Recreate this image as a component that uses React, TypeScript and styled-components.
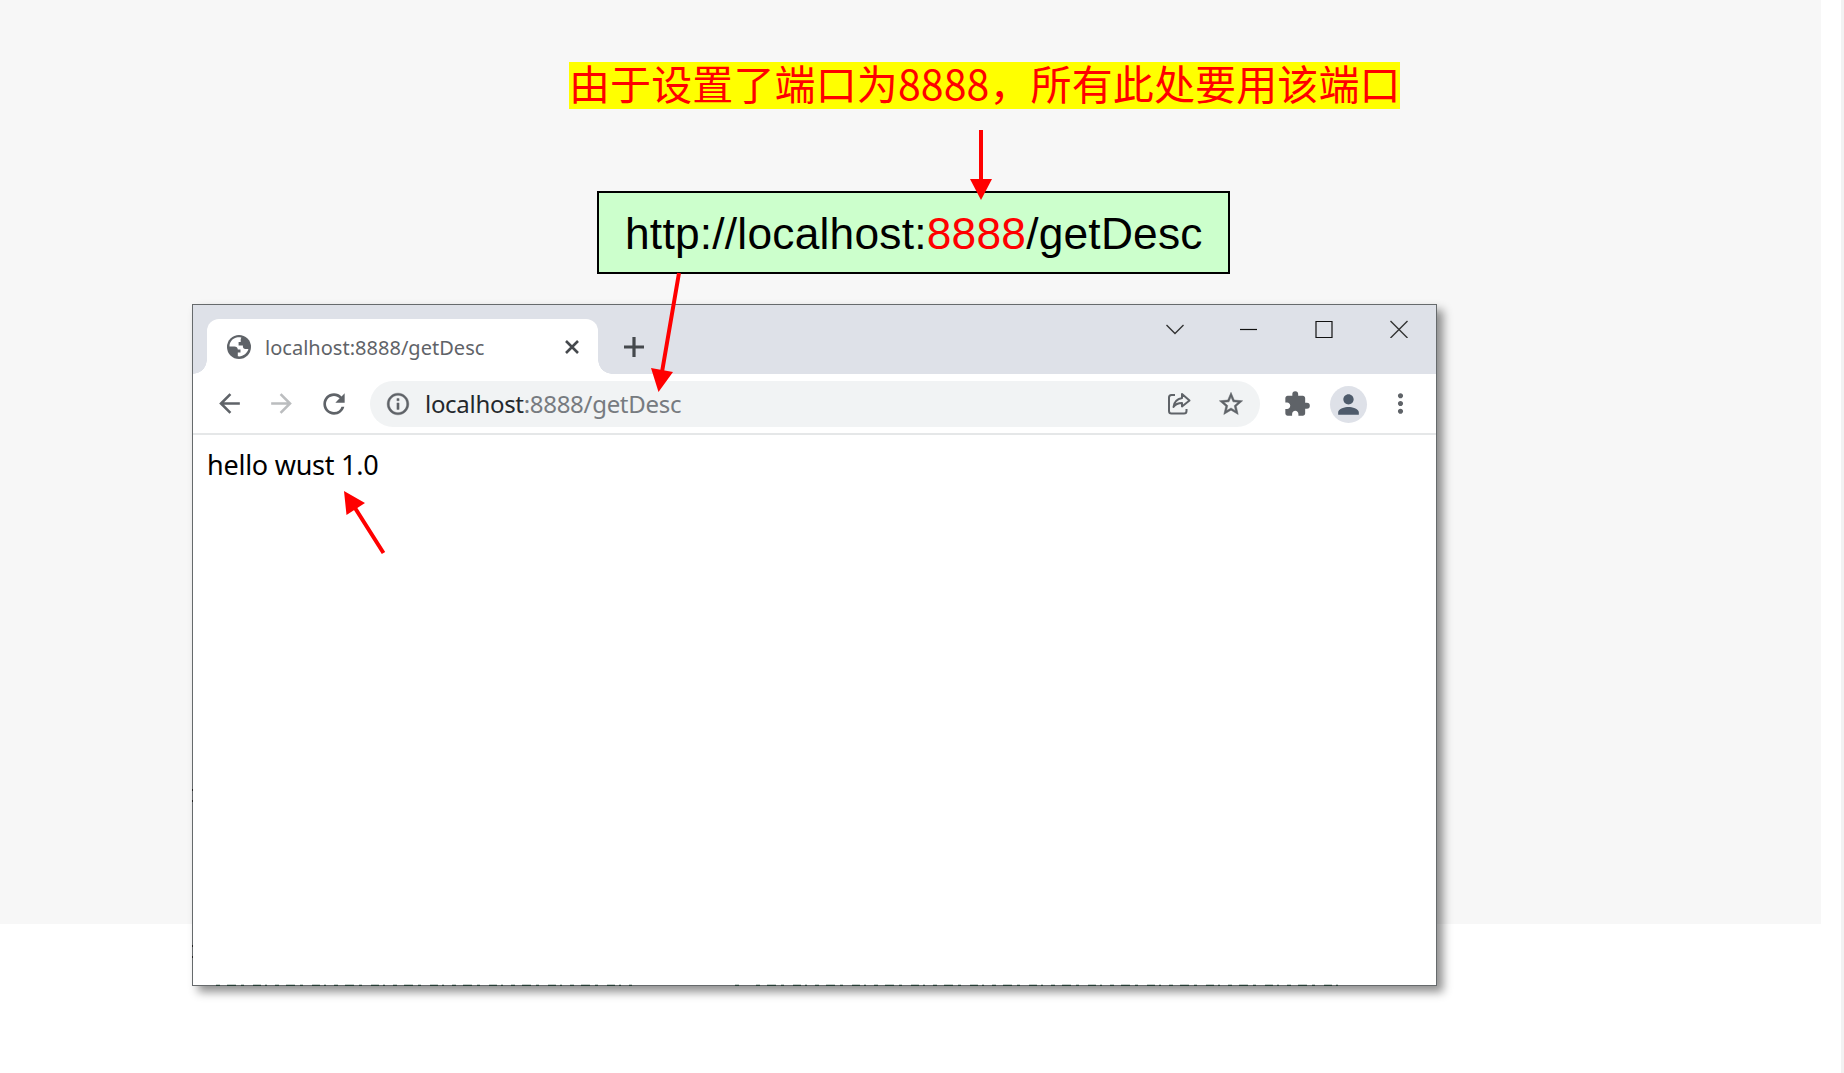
import React from 'react';
import styled, { createGlobalStyle } from 'styled-components';
import { MdArrowBack, MdArrowForward, MdRefresh, MdInfoOutline, MdStarBorder, MdExtension, MdPerson, MdMoreVert } from 'react-icons/md';

const GlobalStyle = createGlobalStyle`
  * { box-sizing: border-box; }
  body { margin: 0; background: #fff; overflow: hidden; }
`;

const Page = styled.main`
  position: relative;
  width: 1844px;
  height: 1073px;
  border-right: 3px solid #f2f2f2;
  background: linear-gradient(#f7f7f7, #f7f7f7) 0 0 / 1821px 924px no-repeat #fff;
  overflow: hidden;
  font-family: "Noto Sans", "Noto Sans CJK SC", sans-serif;
`;

const Heading = styled.h1`
  width: 831px;
  height: 47px;
  margin: 62px 0 0 569px;
  background: #ff0;
  color: #f00;
  font: 400 41px/41px "Noto Sans CJK SC", sans-serif;
  letter-spacing: 0.12px;
  white-space: nowrap;
`;

const UrlCard = styled.div`
  display: flex;
  align-items: center;
  width: 633px;
  height: 83px;
  margin: 82px 0 0 597px;
  padding: 3px 0 0 26px;
  border: 2px solid #000;
  background: #cfc;
  font: 44.3px/1 "Liberation Sans", Arial, sans-serif;
  letter-spacing: 0.22px;
  white-space: nowrap;
`;

const Port = styled.span`
  color: #f00;
`;

const Window = styled.section`
  display: flex;
  flex-direction: column;
  width: 1245px;
  height: 682px;
  margin: 30px 0 0 192px;
  border: 1px solid #666a6c;
  background: #fff;
  box-shadow: 6px 6px 9px rgba(0, 0, 0, 0.44);
`;

const TabStrip = styled.header`
  display: flex;
  align-items: flex-end;
  height: 69px;
  background: #dee1e8;
`;

const Tab = styled.div`
  position: relative;
  display: flex;
  align-items: center;
  width: 391px;
  height: 55px;
  margin-left: 14px;
  padding: 0 19px 0 17px;
  border-radius: 12px 12px 0 0;
  background: #fff;
  &::before, &::after {
    content: "";
    position: absolute;
    bottom: 0;
    width: 14px;
    height: 14px;
  }
  &::before { left: -14px; background: radial-gradient(circle at 0 0, transparent 13.5px, #fff 14px); }
  &::after { right: -14px; background: radial-gradient(circle at 100% 0, transparent 13.5px, #fff 14px); }
`;

const Text = styled.span<{ $size: number; $spacing: number; $color: string }>`
  font-size: ${p => p.$size}px;
  line-height: 1;
  letter-spacing: ${p => p.$spacing}px;
  color: ${p => p.$color};
  white-space: nowrap;
`;

const TabTitle = styled.div`
  display: flex;
  flex: 1;
  margin-left: 11px;
  padding-top: 2px;
`;

const NewTab = styled.div`
  display: flex;
  align-items: center;
  height: 55px;
  margin-left: 26px;
`;

const Controls = styled.div`
  display: flex;
  align-self: flex-start;
  gap: 57px;
  margin: 15px 28px 0 auto;
`;

const Toolbar = styled.nav`
  display: flex;
  align-items: center;
  height: 61px;
  padding-left: 20px;
  border-bottom: 2px solid #e5e7e8;
`;

const Slot = styled.span<{ $w: number; $color?: string; $bold?: boolean }>`
  display: flex;
  flex: none;
  justify-content: center;
  width: ${p => p.$w}px;
  color: ${p => p.$color ?? '#5f6368'};
  ${p => p.$bold && 'path:not([fill="none"]) { stroke: currentColor; stroke-width: 0.4px; }'}
`;

const Omnibox = styled.div`
  display: flex;
  flex: none;
  align-items: center;
  width: 890px;
  height: 46px;
  margin: 0 12px 0 20px;
  padding: 0 3px;
  border-radius: 23px;
  background: #f1f3f4;
`;

const Address = styled.div`
  display: flex;
  flex: 1;
  margin-left: 2px;
`;

const Avatar = styled.span`
  display: flex;
  flex: none;
  align-items: center;
  justify-content: center;
  width: 37px;
  height: 37px;
  margin: 1px 8px 0;
  border-radius: 50%;
  background: #dee1e8;
  color: #4e5b6b;
`;

const Content = styled.article`
  padding: 16px 14px;
`;

const Arrows = styled.svg`
  position: absolute;
  inset: 0;
  pointer-events: none;
`;

const Globe = () => (
  <svg width="24" height="24" viewBox="0 0 24 24">
    <circle cx="12" cy="12" r="12" fill="#5f6368" />
    <path d="M9.5 2.6C5.4 3.6 2.5 7.2 2.5 11.4h4.9c2 0 3.4 1.2 3.4 3.2h2.7v2.8h-2.7v3.9c4.8.7 9.6-2.8 10.6-7.2h-3.1c-1.5 0-2.4-1-2.4-2.5v-1.2h-4.3V6.9h2.1V4.5c0-.8.3-1.4.8-1.8-1.5-.5-3.4-.5-5-.1z" fill="#fff" />
  </svg>
);

const Share = () => (
  <svg width="24" height="24" viewBox="0 0 24 24" fill="none" stroke="#5f6368" strokeWidth="2" strokeLinejoin="round">
    <path d="M8 3H4.500Q2 3 2 5.500V19q0 2.500 2.500 2.500H17q2.500 0 2.500-2.500v-2" />
    <path d="M15 2l7.500 6.500L15 14.500v-3.500c-4 0-6.500 1-8.500 4 .5-5 3.500-8 8.500-9z" />
  </svg>
);

export default function App() {
  return (
    <Page>
      <GlobalStyle />
      <Heading>由于设置了端口为8888，所有此处要用该端口</Heading>
      <UrlCard>http://localhost:<Port>8888</Port>/getDesc</UrlCard>
      <Window>
        <TabStrip>
          <Tab>
            <Slot $w={30}><Globe /></Slot>
            <TabTitle><Text $size={20} $spacing={0.02} $color="#5f6368">localhost:8888/getDesc</Text></TabTitle>
            <svg width="14" height="14" viewBox="0 0 14 14" stroke="#45494d" strokeWidth="2.600"><path d="M1 1l12 12M13 1L1 13" /></svg>
          </Tab>
          <NewTab>
            <svg width="20" height="20" viewBox="0 0 20 20" stroke="#45494d" strokeWidth="3.200"><path d="M0 10h20M10 0v20" /></svg>
          </NewTab>
          <Controls>
            <svg width="18" height="18" viewBox="-2 0 18 18" fill="none" stroke="#333" overflow="visible"><path d="M-.5 5L8 13.500 16.500 5" strokeWidth="1.400" /></svg>
            <svg width="18" height="18" viewBox="0 0 18 18" stroke="#111" strokeWidth="1.200"><path d="M0 9.500h17" /></svg>
            <svg width="18" height="18" viewBox="0 0 18 18" fill="none" stroke="#111" strokeWidth="1.200"><path d="M1 1.500h16v16H1z" /></svg>
            <svg width="18" height="18" viewBox="0 0 18 18" stroke="#333" strokeWidth="1.400"><path d="M.5 1L17.500 18M17.500 1L.5 18" /></svg>
          </Controls>
        </TabStrip>
        <Toolbar>
          <Slot $w={32}><MdArrowBack size={31} /></Slot>
          <Slot $w={73} $color="#bbbdbf"><MdArrowForward size={31} /></Slot>
          <Slot $w={32}><MdRefresh size={32} /></Slot>
          <Omnibox>
            <Slot $w={50} $bold><MdInfoOutline size={26} /></Slot>
            <Address>
              <Text $size={24} $spacing={-0.3} $color="#24282c">localhost</Text>
              <Text $size={24} $spacing={-0.3} $color="#777b80">:8888/getDesc</Text>
            </Address>
            <Slot $w={52}><Share /></Slot>
            <Slot $w={52} $bold><MdStarBorder size={28} /></Slot>
          </Omnibox>
          <Slot $w={50}><MdExtension size={28} /></Slot>
          <Avatar><MdPerson size={31} /></Avatar>
          <Slot $w={50}><MdMoreVert size={31} /></Slot>
        </Toolbar>
        <Content><Text $size={27} $spacing={-0.25} $color="#000">hello wust 1.0</Text></Content>
      </Window>
      <Arrows width="1844" height="1073" stroke="#f00" strokeWidth="4" fill="#f00">
        <path d="M981 130V182M679 273L662 372M383.500 553L355 508" />
        <path stroke="none" d="M970 179h22L981 200zM651 368l22 4-14.500 20zM344 491l21 12-18.500 12z" />
        <path stroke="#243c34" strokeWidth="1.200" strokeDasharray="4 7 9 5 3 9 8 4 2 8" d="M216 985.400H632M735 985.400h6M756 985.400H1344" />
        <path stroke="#222" strokeWidth="1" strokeDasharray="2 9" d="M192.500 789v15M192.500 945v14" />
      </Arrows>
    </Page>
  );
}
